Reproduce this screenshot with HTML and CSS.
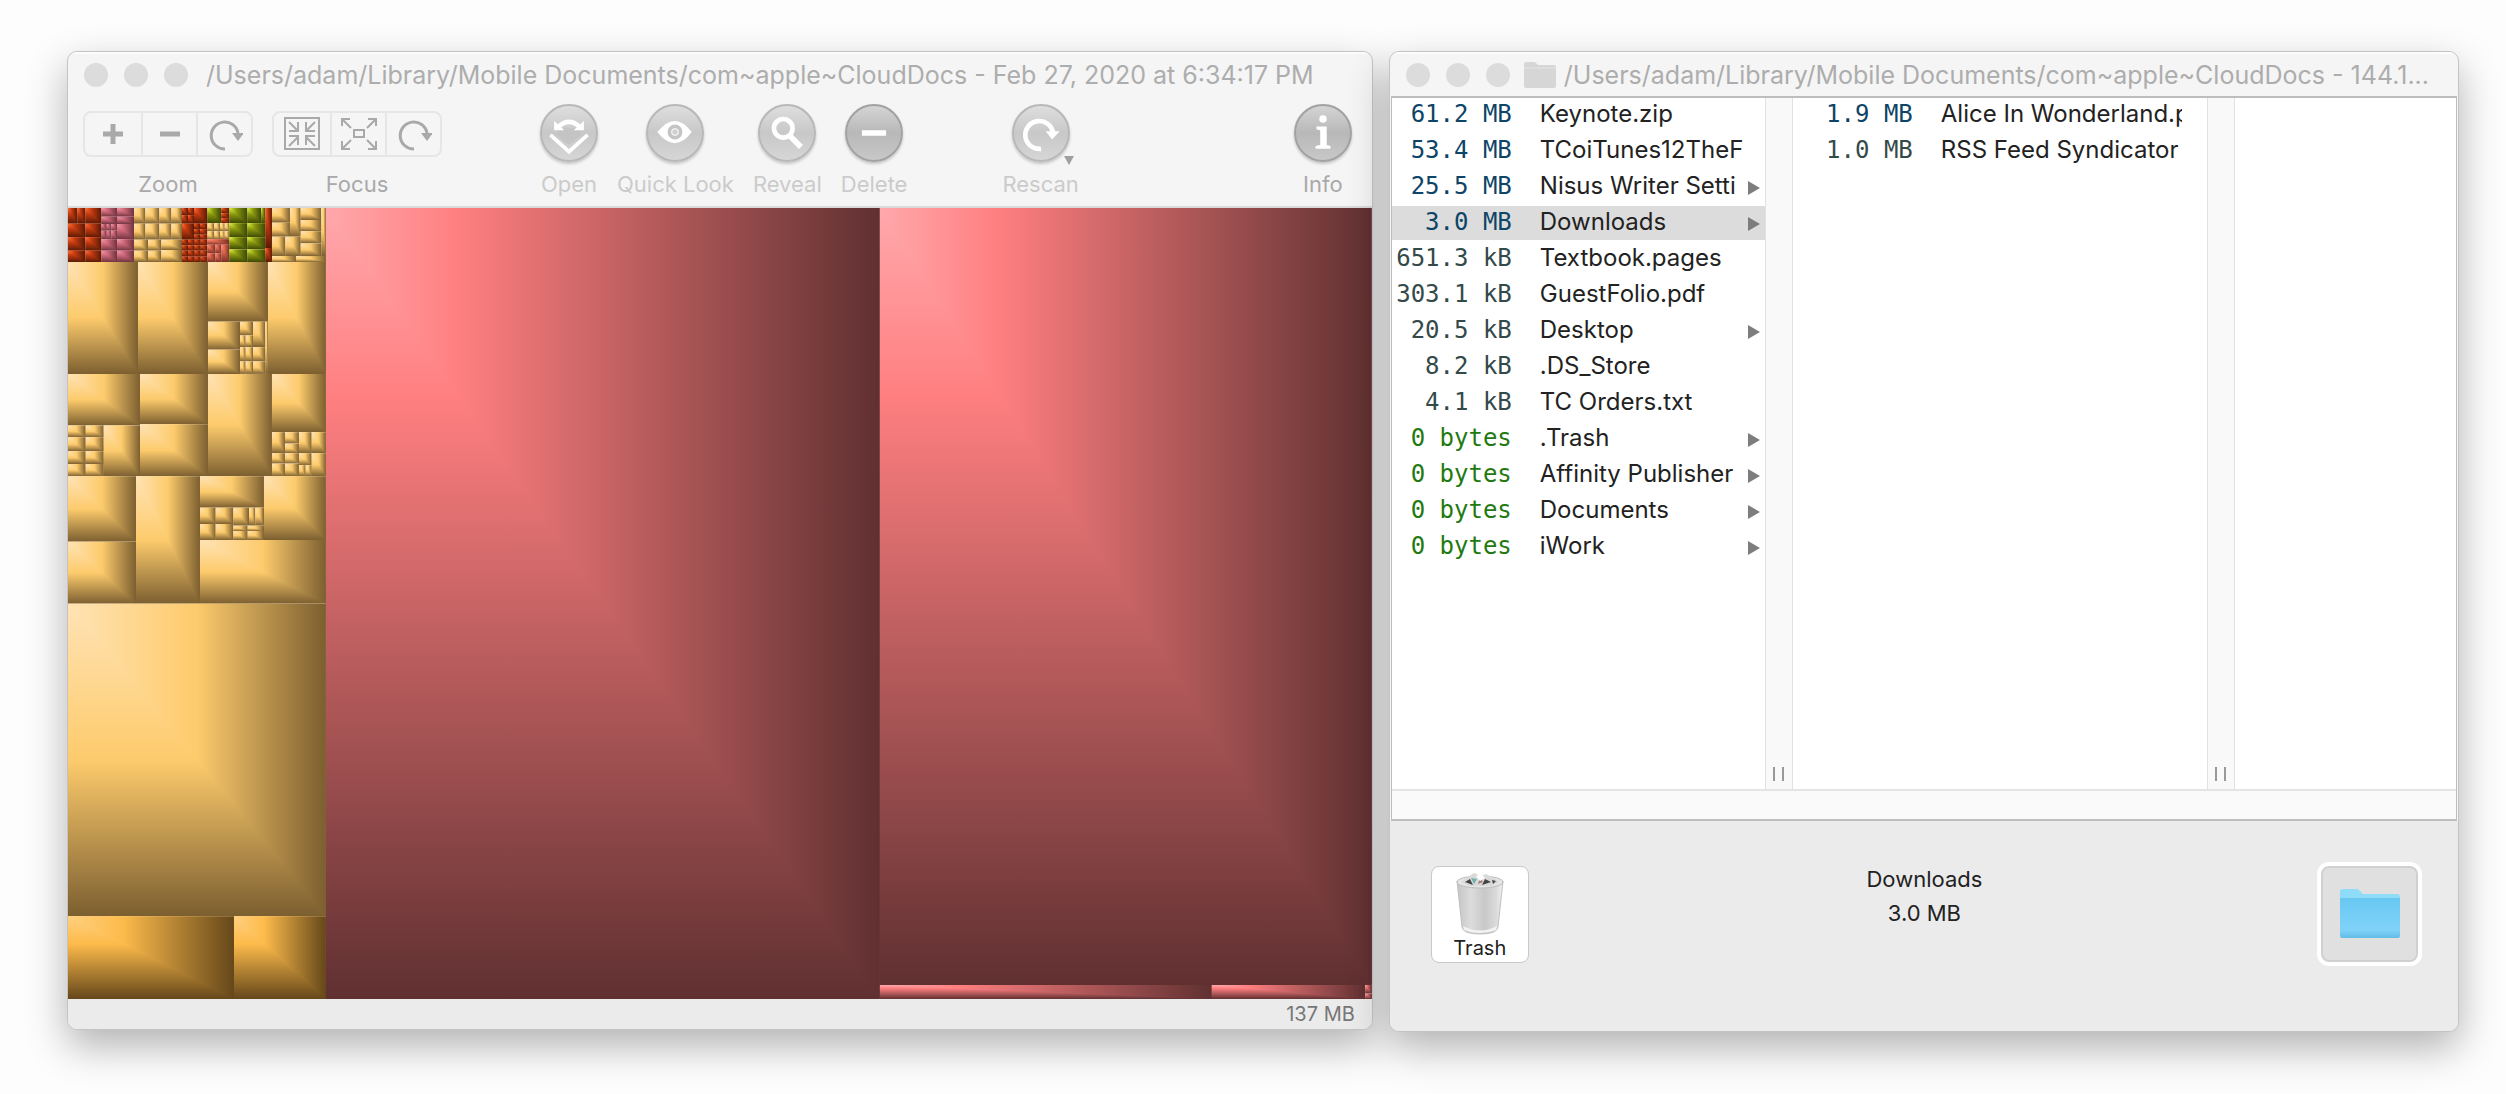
FILE: index.html
```html
<!DOCTYPE html>
<html lang="en">
<head>
<meta charset="utf-8">
<title>Disk usage</title>
<link rel="stylesheet" href="styles.css">
</head>
<body>
<svg class="defs" aria-hidden="true">
  <symbol id="i-spin" viewBox="0 0 36 36"><path d="M18 33A13.500 13.500 0 1 1 31 17" fill="none" stroke="currentColor" stroke-width="3"/><path d="M25 17h12l-6 8z" fill="currentColor"/></symbol>
</svg>
<main class="desktop">
  <section class="window window-map">
    <header class="titlebar">
      <div class="lights"><button aria-label="Close"></button><button aria-label="Minimize"></button><button aria-label="Zoom window"></button></div>
      <h1>/Users/adam/Library/Mobile Documents/com~apple~CloudDocs - Feb 27, 2020 at 6:34:17 PM</h1>
    </header>
    <div class="toolbar">
      <div class="tool strong">
        <div class="segments">
          <button aria-label="Zoom in"><svg width="36" height="36" viewBox="0 0 36 36"><path d="M8 18h20M18 8v20" stroke="currentColor" stroke-width="5"/></svg></button>
          <button aria-label="Zoom out"><svg width="36" height="36" viewBox="0 0 36 36"><path d="M8 18h20" stroke="currentColor" stroke-width="5"/></svg></button>
          <button aria-label="Reset zoom"><svg width="36" height="36"><use href="#i-spin"/></svg></button>
        </div>
        <span>Zoom</span>
      </div>
      <div class="tool strong">
        <div class="segments">
          <button aria-label="Focus in"><svg width="36" height="36" viewBox="0 0 36 36" fill="none" stroke="currentColor" stroke-width="2"><path d="M1 2h34v31H1z"/><path d="M5 6l9 9M5 15h9V6M31 6l-9 9M22 6v9h9M5 30l9-9M5 20h9v9M31 30l-9-9M31 20h-9v9"/></svg></button>
          <button aria-label="Focus out"><svg width="36" height="36" viewBox="0 0 36 36" fill="none" stroke="currentColor" stroke-width="2"><path d="M13 14h10v7H13z"/><path d="M1 3l9 9M1 10V3h8M35 3l-9 9M27 3h8v7M1 33l9-9M1 25v8h8M35 33l-9-9M35 25v8h-8"/></svg></button>
          <button aria-label="Reset focus"><svg width="36" height="36"><use href="#i-spin"/></svg></button>
        </div>
        <span>Focus</span>
      </div>
      <button class="tool first"><svg class="orb" viewBox="0 0 58 58"><path d="M9 31l20 18 20-18" fill="none" stroke="#fff" stroke-width="4"/><path d="M16 24h26l-1 8-12 10-12-10z" fill="#c4c4c4"/><path d="M18 22q11-10 22 0" fill="none" stroke="#fff" stroke-width="5"/><path d="M13 16v10h11zM45 16v10H34z" fill="#fff"/></svg><span>Open</span></button>
      <button class="tool"><svg class="orb" viewBox="0 0 58 58"><path d="M10 28q19-24 37 0-18 24-37 0z" fill="#fff"/><circle cx="29" cy="28" r="6" fill="#fff" stroke="#c4c4c4" stroke-width="4"/><circle cx="29" cy="28" r="3" fill="#d0d0d0"/></svg><span>Quick Look</span></button>
      <button class="tool"><svg class="orb" viewBox="0 0 58 58"><circle cx="25" cy="24" r="10" fill="none" stroke="#fff" stroke-width="5"/><path d="M32 32l12 12" stroke="#fff" stroke-width="6"/></svg><span>Reveal</span></button>
      <button class="tool"><svg class="orb dark" viewBox="0 0 58 58"><path d="M16 26h26v6H16z" fill="#fff"/></svg><span>Delete</span></button>
      <button class="tool rescan"><svg class="orb" viewBox="0 0 58 58"><path d="M29 46A15 15 0 1 1 42 29" fill="none" stroke="#fff" stroke-width="5"/><path d="M34 27h15l-8 9z" fill="#fff"/></svg><span>Rescan</span></button>
      <button class="tool strong last"><svg class="orb dark" viewBox="0 0 58 58"><circle cx="29" cy="14" r="4" fill="#fff"/><path d="M22 22h11v20l4 1v3H21v-3l5-1V26l-4-1z" fill="#fff"/></svg><span>Info</span></button>
    </div>
    <svg class="treemap" id="treemap" viewBox="24 24 3912 2370" preserveAspectRatio="none" role="img" aria-label="Treemap of files by size"></svg>
    <footer class="status">137 MB</footer>
  </section>

  <section class="window window-list">
    <header class="titlebar">
      <div class="lights"><button aria-label="Close"></button><button aria-label="Minimize"></button><button aria-label="Zoom window"></button></div>
      <svg class="proxy" viewBox="0 0 32 26"><path d="M0 2q0-2 2-2h9l3 3h16q2 0 2 2v19q0 2-2 2H2q-2 0-2-2z" fill="#d6d6d6"/><path d="M0 6h32" stroke="#e4e4e4"/></svg>
      <h1>/Users/adam/Library/Mobile Documents/com~apple~CloudDocs - 144.1...</h1>
    </header>
    <div class="browser">
      <div class="columns">
        <ul class="files">
          <li class="big"><span>61.2 MB</span><b>Keynote.zip</b></li>
          <li class="big"><span>53.4 MB</span><b>TCoiTunes12TheF</b></li>
          <li class="big folder"><span>25.5 MB</span><b>Nisus Writer Setti</b></li>
          <li class="big folder selected"><span>3.0 MB</span><b>Downloads</b></li>
          <li><span>651.3 kB</span><b>Textbook.pages</b></li>
          <li><span>303.1 kB</span><b>GuestFolio.pdf</b></li>
          <li class="folder"><span>20.5 kB</span><b>Desktop</b></li>
          <li><span>8.2 kB</span><b>.DS_Store</b></li>
          <li><span>4.1 kB</span><b>TC Orders.txt</b></li>
          <li class="empty folder"><span>0 bytes</span><b>.Trash</b></li>
          <li class="empty folder"><span>0 bytes</span><b>Affinity Publisher</b></li>
          <li class="empty folder"><span>0 bytes</span><b>Documents</b></li>
          <li class="empty folder"><span>0 bytes</span><b>iWork</b></li>
        </ul>
        <div class="divider"><i></i><i></i></div>
        <ul class="files wide">
          <li class="big"><span>1.9 MB</span><b>Alice In Wonderland.p</b></li>
          <li><span>1.0 MB</span><b>RSS Feed Syndicator</b></li>
        </ul>
        <div class="divider"><i></i><i></i></div>
        <div class="rest"></div>
      </div>
      <div class="scroll"></div>
    </div>
    <footer class="details">
      <button class="trash">
        <svg width="50" height="64" viewBox="0 0 50 64">
          <defs><linearGradient id="can" x1="0" x2="1" y1="0" y2="0"><stop offset="0" stop-color="#c4c4c4"/><stop offset=".3" stop-color="#dcdcdc"/><stop offset=".6" stop-color="#c8c8c8"/><stop offset=".85" stop-color="#dadada"/><stop offset="1" stop-color="#f2f2f2"/></linearGradient></defs>
          <path d="M2 9l5 46q1 7 18 7t18-7l5-46z" fill="url(#can)" stroke="#c0c0c0"/>
          <path d="M8 54q17 9 34 0l-1 4q-16 6-32 0z" fill="#f3f3f3"/>
          <ellipse cx="25" cy="10" rx="23" ry="6" fill="#e6e6e6" stroke="#bcbcbc"/>
          <path d="M6 10l7-5 6-4 7 3 5-2 8 4 5 4-8 4H14z" fill="#d9d9d9"/>
          <path d="M10 10l5-3 3 6zM27 13l3-6 6 3zM37 8l4 1-3 3z" fill="#444"/><path d="M16 6l6 1-3 5z" fill="#6fb3ab"/><path d="M23 12l2-6 3 4z" fill="#a07f72"/><path d="M21 4l5-2 4 4-5 3z" fill="#fff"/>
        </svg>
        <span>Trash</span>
      </button>
      <div class="info"><span>Downloads</span><span>3.0 MB</span></div>
      <button class="well" aria-label="Downloads folder">
        <svg width="62" height="52" viewBox="0 0 62 52">
          <defs><linearGradient id="fold" x1="0" x2="0" y1="0" y2="1"><stop offset="0" stop-color="#68c8f2"/><stop offset=".8" stop-color="#80d2f8"/><stop offset="1" stop-color="#62bde6"/></linearGradient></defs>
          <path d="M1 4q0-3 3-3h15l5 5h34q3 0 3 3v8H1z" fill="#8fdcf9"/>
          <path d="M1 10h60v38q0 2-2 2H3q-2 0-2-2z" fill="url(#fold)"/>
        </svg>
      </button>
    </footer>
  </section>
</main>
<script src="treemap.js"></script>
</body>
</html>
```
FILE: styles.css
```css
* { box-sizing: border-box; }
body {
  margin: 0;
  background: #fdfdfd;
  font-family: Inter, "Liberation Sans", sans-serif;
  font-size: 24px;
  color: #222;
}
button { font: inherit; color: inherit; padding: 0; margin: 0; border: 0; background: none; }
.defs { position: absolute; width: 0; height: 0; }

.desktop {
  min-height: 100vh;
  padding: 51px 47px 62px 67px;
  display: flex;
  gap: 16px;
}
.window {
  min-width: 0;
  display: flex;
  flex-direction: column;
  background: #f5f5f5;
  border: 1px solid #c4c4c4;
  border-radius: 10px;
  overflow: hidden;
  box-shadow: 0 16px 40px rgba(0, 0, 0, .3);
}
.window-map { flex: 1306 1 0; margin-bottom: 2px; }
.window-list { flex: 1070 1 0; }

.titlebar {
  height: 44px;
  padding: 0 16px;
  display: flex;
  align-items: center;
  border-top: 2px solid #fcfcfc;
}
.titlebar h1 {
  margin: 0;
  font-size: 25px;
  font-weight: 400;
  color: #adadad;
  white-space: nowrap;
}
.lights { display: flex; gap: 16px; padding-right: 18px; }
.lights button { width: 24px; height: 24px; border-radius: 50%; background: #dcdcdc; }
.proxy { width: 32px; height: 26px; margin: 0 8px 0 -4px; flex: none; }

.toolbar {
  height: 112px;
  padding: 8px 20px 0 15px;
  display: flex;
  align-items: flex-start;
  gap: 19px;
  border-bottom: 2px solid #dadada;
}
.tool {
  display: flex;
  flex-direction: column;
  align-items: center;
  gap: 8px;
  font-size: 22px;
  line-height: 28px;
  color: #cbcbcb;
  white-space: nowrap;
}
.tool.strong { color: #a9a9a9; }
.first { margin-left: 79px; }
.rescan { margin-left: 76px; position: relative; }
.rescan::after {
  content: "";
  position: absolute;
  right: 5px;
  top: 52px;
  border: 5px solid transparent;
  border-top: 9px solid #a0a0a0;
  border-bottom: 0;
}
.last { margin-left: auto; }
.segments {
  height: 46px;
  margin: 7px 0 5px;
  display: flex;
  border: 2px solid #e6e6e6;
  border-radius: 8px;
}
.segments button { width: 55px; display: grid; place-items: center; }
.segments button:first-child { width: 56px; }
.segments button + button { border-left: 2px solid #e6e6e6; }
.orb {
  width: 58px;
  height: 58px;
  border-radius: 50%;
  border: 2px solid #b8b8b8;
  background: linear-gradient(#dedede, #c8c8c8 50%, #d6d6d6);
  box-shadow: 0 2px 3px rgba(0, 0, 0, .2);
}
.orb.dark { border-color: #a2a2a2; background: linear-gradient(#d4d4d4, #b8b8b8 50%, #c8c8c8); }

.treemap { display: block; width: 100%; flex: 1 1 0; min-height: 0; }
.status {
  height: 30px;
  padding-right: 17px;
  background: #ebebeb;
  color: #777;
  font-size: 20px;
  line-height: 30px;
  text-align: right;
}

.browser {
  flex: 1;
  margin: 0 1px;
  display: flex;
  flex-direction: column;
  background: #fff;
  border: 2px solid #bdbdbd;
  border-width: 2px 1px;
}
.columns { flex: 1; display: flex; }
.files { margin: 0; padding: 0; width: 373px; list-style: none; }
.files.wide { width: 414px; }
.files li {
  position: relative;
  height: 34px;
  margin-bottom: 2px;
  padding-right: 20px;
  display: flex;
  gap: 28px;
  line-height: 32px;
}
.files.wide li { padding-right: 25px; }
.files span {
  width: 120px;
  flex: none;
  text-align: right;
  font-family: "DejaVu Sans Mono", monospace;
  white-space: nowrap;
  color: #344a4a;
}
.files b { font-weight: 400; flex: 1; min-width: 0; overflow: hidden; white-space: nowrap; }
.files .big span { color: #0d4467; }
.files .empty span { color: #23790f; }
.files .selected { background: #dcdcdc; }
.files .folder::after {
  content: "";
  position: absolute;
  right: 5px;
  top: 11px;
  border: 7px solid transparent;
  border-left: 12px solid #7d7d7d;
  border-right: 0;
}
.divider {
  width: 28px;
  padding-bottom: 8px;
  display: flex;
  justify-content: center;
  align-items: flex-end;
  gap: 7px;
  background: #f9f9f9;
  border: 1px solid #e2e2e2;
  border-width: 0 1px;
}
.divider i { width: 2px; height: 14px; background: #999; }
.rest { flex: 1; }
.scroll { height: 30px; background: #fafafa; border-top: 2px solid #e4e4e4; }

.details {
  height: 210px;
  padding: 41px 36px 0 41px;
  display: grid;
  grid-template-columns: 101px 1fr 105px;
  background: #ebebeb;
  align-items: start;
}
.trash {
  width: 98px;
  height: 97px;
  margin-top: 4px;
  padding-top: 3px;
  display: flex;
  flex-direction: column;
  align-items: center;
  justify-content: center;
  background: #fff;
  border: 1px solid #c9c9c9;
  border-radius: 8px;
  font-size: 20px;
  line-height: 24px;
}
.info {
  display: flex;
  flex-direction: column;
  align-items: center;
  font-size: 22px;
  line-height: 34px;
}
.well {
  width: 105px;
  height: 104px;
  display: grid;
  place-items: center;
  background: #e0e0e0;
  border: 4px solid #fff;
  border-radius: 12px;
  box-shadow: inset 0 0 0 2px #d0d0d0;
}
```
FILE: treemap.js
```js
// Each tile is shaded from its top left corner towards its right and bottom edges.
const SHADES = {
  tan: [["0", "#ffe3b5"], [".5", "#fdcb6c"], ["1", "#7c5f30"]],
  gold: [["0", "#ffd080"], [".33", "#fdbb4b"], ["1", "#65471a"]],
  rose: [["0", "#ffa8ac"], [".24", "#ff7f80"], ["1", "#603031"]],
  pink: [["0", "#ef9aa8"], [".4", "#d0697b"], ["1", "#70343f"]],
  rust: [["0", "#ff6a35"], [".4", "#c23a10"], ["1", "#5a1a05"]],
  coral: [["0", "#ff8f78"], [".4", "#dc6650"], ["1", "#7a3024"]],
  olive: [["0", "#dcee40"], [".4", "#8b9a10"], ["1", "#3c4705"]]
};

// [shade, x edges, y edges]: every pair of neighbouring edges bounds a tile.
const BLOCKS = [
  ["rust", [24, 52, 76], [24, 71]], ["rust", [76, 124], [24, 71]],
  ["rust", [24, 76, 124], [71, 112, 152, 186]],
  ["pink", [124, 171, 222], [24, 50, 72]],
  ["pink", [124, 140, 154, 171], [72, 92, 118]], ["pink", [171, 222], [72, 118]],
  ["pink", [124, 171, 222], [118, 152, 186]],
  ["tan", [222, 256, 298, 334, 366], [24, 71, 119]],
  ["tan", [222, 264, 304], [119, 152, 186]], ["tan", [304, 366], [119, 150, 186]],
  ["rust", [366, 384, 402], [24, 46, 71]], ["rust", [402, 442], [24, 71]],
  ["rust", [366, 402], [71, 119]], ["rust", [402, 420, 442], [71, 88, 104, 119]],
  ["rust", [366, 384, 404, 422, 442], [119, 136, 152, 170, 186]],
  ["olive", [442, 484], [24, 70]], ["rust", [484, 508], [24, 40, 55, 70]],
  ["tan", [442, 462, 480, 494, 508], [70, 94, 118]],
  ["coral", [442, 508], [118, 134]], ["coral", [442, 466, 484], [134, 160, 186]], ["coral", [484, 508], [134, 186]],
  ["olive", [508, 562, 604], [24, 70]], ["olive", [604, 616], [24, 70]],
  ["olive", [508, 562, 616], [70, 112, 148, 186]],
  ["rust", [616, 636], [24, 144, 186]],
  ["tan", [636, 690], [24, 68, 110]], ["tan", [690, 722], [24, 110]],
  ["tan", [636, 676, 722], [110, 168]], ["tan", [636, 708], [168, 186]], ["tan", [708, 798], [168, 186]],
  ["tan", [722, 784], [24, 60, 94, 130, 168]], ["tan", [784, 798], [24, 168]],

  ["tan", [24, 234, 444], [186, 521]],
  ["tan", [444, 624], [186, 365]],
  ["tan", [444, 540], [365, 449, 521]],
  ["tan", [540, 579], [365, 406]], ["tan", [579, 616], [365, 441, 484, 521]],
  ["tan", [540, 557, 579], [406, 441, 484, 521]],
  ["tan", [616, 624], [365, 521]],
  ["tan", [624, 798], [186, 521]],

  ["tan", [24, 240], [521, 676]], ["tan", [240, 444], [521, 672, 828]],
  ["tan", [444, 636], [521, 828]], ["tan", [636, 798], [521, 696]],
  ["tan", [24, 77, 131], [676, 711, 753, 791, 828]], ["tan", [131, 240], [676, 828]],
  ["tan", [636, 675], [696, 759, 790, 828]], ["tan", [675, 717], [696, 730, 759, 790, 828]],
  ["tan", [717, 755], [696, 759, 795]], ["tan", [717, 737, 755], [795, 828]],
  ["tan", [755, 798], [696, 759, 828]],

  ["tan", [24, 228], [828, 1024, 1210]], ["tan", [228, 420], [828, 1210]],
  ["tan", [420, 612], [828, 922]], ["tan", [612, 798], [828, 1019]],
  ["tan", [420, 467, 520], [922, 971, 1019]], ["tan", [520, 567], [922, 976]],
  ["tan", [567, 586, 612], [922, 976]], ["tan", [520, 563, 612], [976, 992, 1019]],
  ["tan", [420, 798], [1019, 1210]],

  ["tan", [24, 798], [1210, 2146]],
  ["gold", [24, 522, 798], [2146, 2394]],
  ["rose", [798, 2460], [24, 2394]],
  ["rose", [2460, 3936], [24, 2352]],
  ["rose", [2460, 3456, 3916], [2352, 2394]],
  ["rose", [3916, 3936], [2352, 2378, 2394]]
];

let markup = "";
for (const [name, stops] of Object.entries(SHADES)) {
  const inner = stops.map(([o, c]) => `<stop offset="${o}" stop-color="${c}"/>`).join("");
  markup += `<linearGradient id="${name}-v" x1="0" y1="0" x2="0" y2="1">${inner}</linearGradient>`
    + `<linearGradient id="${name}-h" x1="0" y1="0" x2="1" y2="0">${inner}</linearGradient>`;
}
for (const [shade, xs, ys] of BLOCKS) {
  for (let i = 0; i < xs.length - 1; i++) {
    for (let j = 0; j < ys.length - 1; j++) {
      const [l, r, t, b] = [xs[i], xs[i + 1], ys[j], ys[j + 1]];
      markup += `<path d="M${l} ${t}H${r}V${b}H${l}z" fill="url(#${shade}-v)"/>`
        + `<path d="M${l} ${t}H${r}V${b}z" fill="url(#${shade}-h)"/>`;
    }
  }
}
document.getElementById("treemap").innerHTML = markup;
```
